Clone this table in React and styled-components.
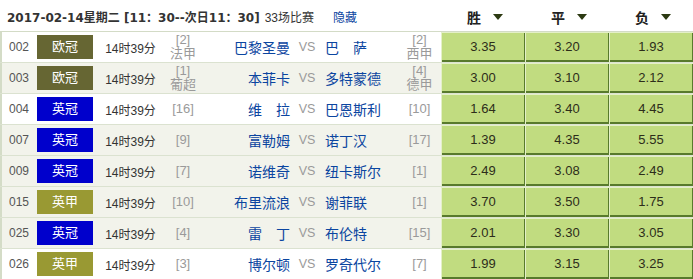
import React from "react";
import styled, { createGlobalStyle } from "styled-components";

const Global = createGlobalStyle`
  html, body { margin: 0; padding: 0; background: #fff; }
  body { font-family: "Liberation Sans", "Noto Sans CJK SC", sans-serif; font-size: 12px; color: #333; }
`;

const Table = styled.div`
  width: 693px;
  overflow: hidden;
`;

const Header = styled.div`
  display: grid;
  grid-template-columns: 441px repeat(3, 84px);
  height: 31px;
  border-bottom: 1px solid #d3dbc6;
  align-items: center;
`;

const TitleBar = styled.div`
  display: flex;
  align-items: center;
  padding-left: 7px;
  padding-top: 1px;
`;

const Title = styled.span`
  font-family: "DejaVu Sans", "Noto Sans CJK SC", sans-serif;
  font-weight: bold;
  font-size: 12px;
  color: #333;
  white-space: nowrap;
`;

const Count = styled.span`
  margin-left: 5px;
  color: #333;
  white-space: nowrap;
`;

const HideLink = styled.a`
  margin-left: 19px;
  color: #0b45a0;
  text-decoration: none;
  cursor: pointer;
`;

const OddsHead = styled.div`
  display: flex;
  justify-content: center;
  align-items: center;
  padding-left: 4px;
  padding-top: 2px;
  font-weight: bold;
  font-size: 14px;
  color: #222;
`;

const Arrow = styled.span`
  display: inline-block;
  margin-left: 12px;
  width: 0;
  height: 0;
  border-left: 5px solid transparent;
  border-right: 5px solid transparent;
  border-top: 6px solid #2c3a12;
`;

const Row = styled.div`
  display: grid;
  grid-template-columns: 37px 56px 75px 30px 92px 34px 74px 43px 252px;
  height: 30px;
  border-bottom: 1px solid #dbe2d0;
  background: ${(p) => (p.$alt ? "#f2f3eb" : "#fff")};
  box-shadow: inset 2px 0 0 #d4dcc7;
  align-items: center;
`;

const No = styled.div`
  text-align: center;
  color: #555;
  padding-left: 1px;
`;

const Badge = styled.div`
  height: 24px;
  line-height: 24px;
  background: ${(p) => p.$color};
  color: #fff;
  font-size: 13px;
  text-align: center;
`;

const Time = styled.div`
  text-align: center;
  color: #333;
`;

const Rank = styled.div`
  text-align: center;
  color: #9a9a9a;
  line-height: 14px;
  font-size: 13px;
  white-space: nowrap;
`;

const Team = styled.div`
  font-size: 14px;
  color: #0b45a0;
  white-space: nowrap;
  text-align: ${(p) => (p.$right ? "right" : "left")};
  padding-left: ${(p) => (p.$right ? "0" : "1px")};
`;

const Vs = styled.div`
  text-align: center;
  color: #9a9a9a;
  font-size: 12.5px;
`;

const OddsGroup = styled.div`
  display: grid;
  grid-template-columns: repeat(3, 84px);
  height: 30px;
`;

const Odd = styled.div`
  background: #c1dc80;
  box-shadow: inset 1px 1px 0 #e4f0c8, inset -1px -2px 0 #587a2c;
  display: flex;
  align-items: center;
  justify-content: center;
  font-size: 13px;
  color: #2d2d1a;
  padding-bottom: 1px;
  cursor: pointer;
`;

const LEAGUE = {
  欧冠: "#666633",
  英冠: "#0000cc",
  英甲: "#999933",
};

const rows = [
  { no: "002", lg: "欧冠", hr: "[2]", hl: "法甲", home: "巴黎圣曼", away: "巴　萨", ar: "[2]", al: "西甲", odds: ["3.35", "3.20", "1.93"], alt: false },
  { no: "003", lg: "欧冠", hr: "[1]", hl: "葡超", home: "本菲卡", away: "多特蒙德", ar: "[4]", al: "德甲", odds: ["3.00", "3.10", "2.12"], alt: true },
  { no: "004", lg: "英冠", hr: "[16]", home: "维　拉", away: "巴恩斯利", ar: "[10]", odds: ["1.64", "3.40", "4.45"], alt: false },
  { no: "007", lg: "英冠", hr: "[9]", home: "富勒姆", away: "诺丁汉", ar: "[17]", odds: ["1.39", "4.35", "5.55"], alt: true },
  { no: "009", lg: "英冠", hr: "[7]", home: "诺维奇", away: "纽卡斯尔", ar: "[1]", odds: ["2.49", "3.08", "2.49"], alt: true },
  { no: "015", lg: "英甲", hr: "[10]", home: "布里流浪", away: "谢菲联", ar: "[1]", odds: ["3.70", "3.50", "1.75"], alt: true },
  { no: "025", lg: "英冠", hr: "[4]", home: "雷　丁", away: "布伦特", ar: "[15]", odds: ["2.01", "3.30", "3.05"], alt: true },
  { no: "026", lg: "英甲", hr: "[3]", home: "博尔顿", away: "罗奇代尔", ar: "[7]", odds: ["1.99", "3.15", "3.25"], alt: false },
];

export default function App() {
  return (
    <>
      <Global />
      <Table>
        <Header>
          <TitleBar>
            <Title>2017-02-14星期二 [11：30--次日11：30]</Title>
            <Count>33场比赛</Count>
            <HideLink>隐藏</HideLink>
          </TitleBar>
          <OddsHead>胜<Arrow /></OddsHead>
          <OddsHead>平<Arrow /></OddsHead>
          <OddsHead>负<Arrow /></OddsHead>
        </Header>
        {rows.map((r) => (
          <Row key={r.no} $alt={r.alt}>
            <No>{r.no}</No>
            <Badge $color={LEAGUE[r.lg]}>{r.lg}</Badge>
            <Time>14时39分</Time>
            <Rank>
              {r.hr}
              {r.hl && <><br />{r.hl}</>}
            </Rank>
            <Team $right>{r.home}</Team>
            <Vs>VS</Vs>
            <Team>{r.away}</Team>
            <Rank>
              {r.ar}
              {r.al && <><br />{r.al}</>}
            </Rank>
            <OddsGroup>
              {r.odds.map((o, i) => (
                <Odd key={i}>{o}</Odd>
              ))}
            </OddsGroup>
          </Row>
        ))}
      </Table>
    </>
  );
}
